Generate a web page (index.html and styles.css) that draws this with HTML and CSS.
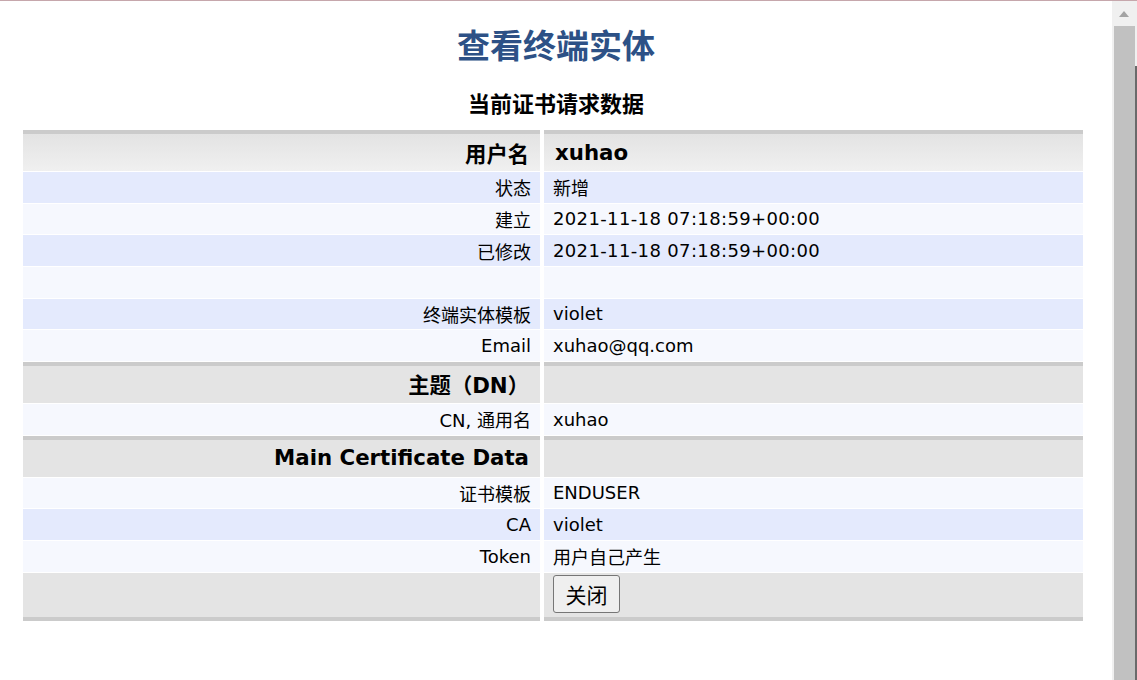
FILE: index.html
```html
<!DOCTYPE html>
<html lang="zh-CN">
<head>
<meta charset="utf-8">
<title>查看终端实体</title>
<link rel="stylesheet" href="styles.css">
</head>
<body>
<div class="page">
  <h1 class="title">查看终端实体</h1>
  <h3 class="subtitle">当前证书请求数据</h3>
  <div class="table">
    <div class="row head grad">
      <div class="cell label">用户名</div>
      <div class="cell value">xuhao</div>
    </div>
    <div class="row odd"><div class="cell label">状态</div><div class="cell value">新增</div></div>
    <div class="row even"><div class="cell label">建立</div><div class="cell value num">2021-11-18 07:18:59+00:00</div></div>
    <div class="row odd"><div class="cell label">已修改</div><div class="cell value num">2021-11-18 07:18:59+00:00</div></div>
    <div class="row even"><div class="cell label"></div><div class="cell value"></div></div>
    <div class="row odd"><div class="cell label">终端实体模板</div><div class="cell value">violet</div></div>
    <div class="row even"><div class="cell label">Email</div><div class="cell value">xuhao@qq.com</div></div>
    <div class="row head">
      <div class="cell label">主题（DN）</div>
      <div class="cell value"></div>
    </div>
    <div class="row even"><div class="cell label">CN, 通用名</div><div class="cell value">xuhao</div></div>
    <div class="row head">
      <div class="cell label">Main Certificate Data</div>
      <div class="cell value"></div>
    </div>
    <div class="row even"><div class="cell label">证书模板</div><div class="cell value">ENDUSER</div></div>
    <div class="row odd"><div class="cell label">CA</div><div class="cell value">violet</div></div>
    <div class="row even"><div class="cell label">Token</div><div class="cell value">用户自己产生</div></div>
    <div class="row foot">
      <div class="cell label"></div>
      <div class="cell value"><button class="btn" type="button">关闭</button></div>
    </div>
  </div>
</div>
<div class="scrollbar">
  <div class="arrow"></div>
  <div class="thumb"></div>
  <div class="edge"></div>
</div>
</body>
</html>
```

FILE: styles.css
```css
html, body {
  margin: 0;
  padding: 0;
  background: #ffffff;
  overflow: hidden;
}
body {
  border-top: 1px solid #c6a7ac;
  font-family: "DejaVu Sans", "Noto Sans CJK SC", sans-serif;
  font-size: 18px;
  color: #000;
}
.page {
  width: 1112px;
}
.title {
  margin: 26px 0 0;
  text-align: center;
  font-size: 33px;
  line-height: 40px;
  font-weight: bold;
  color: #2d5186;
}
.subtitle {
  margin: 25px 0 0;
  text-align: center;
  font-size: 22px;
  line-height: 26px;
  font-weight: bold;
}
.table {
  margin: 12px 0 0 23px;
  width: 1060px;
  display: flex;
  flex-direction: column;
  gap: 1px;
}
.row {
  display: grid;
  grid-template-columns: 517px 539px;
  column-gap: 4px;
  height: 30.67px;
}
.cell {
  display: flex;
  align-items: center;
  white-space: nowrap;
}
.label {
  justify-content: flex-end;
  padding-right: 9px;
}
.value {
  padding-left: 9px;
}
.num {
  letter-spacing: 0.36px;
}
.odd .cell { background: #e4eafd; }
.even .cell { background: #f6f8fe; }
.head {
  height: 41px;
}
.head .cell {
  background: #e4e4e4;
  border-top: 4px solid #cbcbcb;
  font-size: 21.3px;
  font-weight: bold;
  padding-bottom: 1px;
}
.head .label { padding-right: 11px; }
.head .value { padding-left: 11px; }
.grad .cell {
  background: linear-gradient(#e3e3e3, #f0f0f0);
}
.foot {
  height: 48px;
}
.foot .cell {
  background: #e4e4e4;
  border-bottom: 4px solid #cbcbcb;
  align-items: flex-start;
  padding-top: 2px;
}
.btn {
  width: 67px;
  height: 38px;
  margin: 0;
  padding: 0;
  border: 1px solid #767676;
  border-radius: 3px;
  background: #efefef;
  font-family: "Noto Sans CJK SC", sans-serif;
  font-size: 21px;
  color: #000;
}
.scrollbar {
  position: fixed;
  top: 1px;
  right: 0;
  bottom: 0;
  width: 25px;
  background: #f0f0f0;
}
.arrow {
  position: absolute;
  top: 10px;
  left: 7px;
  width: 0;
  height: 0;
  border-left: 5.5px solid transparent;
  border-right: 5.5px solid transparent;
  border-bottom: 6px solid #a3a3a3;
}
.thumb {
  position: absolute;
  top: 25px;
  left: 2px;
  width: 21px;
  bottom: 0;
  background: #c1c1c1;
}
.edge {
  position: absolute;
  top: 65px;
  right: 0;
  width: 2px;
  bottom: 0;
  background: #6a6a6a;
}
```
